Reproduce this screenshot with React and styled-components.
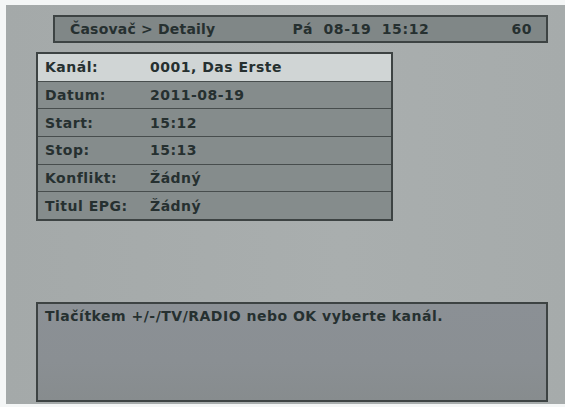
import styled, { createGlobalStyle } from 'styled-components';

const GlobalStyle = createGlobalStyle`
	html, body {
		margin: 0;
		padding: 0;
		background: #f4f6f6;
	}
	body {
		font-family: "DejaVu Sans", Verdana, sans-serif;
		font-size: 14px;
		font-weight: bold;
		letter-spacing: 0.5px;
		color: #263030;
	}
`;

const Screen = styled.div`
	display: flex;
	flex-direction: column;
	box-sizing: border-box;
	width: 559px;
	height: 399px;
	margin: 5px 0 0 6px;
	padding: 10px 17px 2px 30px;
	background: linear-gradient(90deg, #a4a9a9 0%, #a9aeae 60%, #a6abab 100%);
`;

const TitleBar = styled.div`
	display: flex;
	align-items: center;
	box-sizing: border-box;
	height: 28px;
	margin-left: 17px;
	padding: 0 14px 0 15px;
	background: #808787;
	border: 2px solid #3d4343;
`;

const Title = styled.span`
	flex: 1;
	letter-spacing: 0.2px;
`;

const Clock = styled.span`
	width: 219px;
	word-spacing: 5px;
	letter-spacing: 0.6px;
`;

const Signal = styled.span``;

const Table = styled.div`
	display: flex;
	flex-direction: column;
	box-sizing: border-box;
	width: 357px;
	margin-top: 9px;
	border: 2px solid #3d4343;
	background: #858c8c;
`;

const Row = styled.div`
	display: flex;
	align-items: center;
	height: 26.7px;
	padding-left: 7px;
	background: ${({ $active }) => ($active ? '#d0d5d5' : '#858c8c')};
	&:not(:last-child) {
		border-bottom: 1px solid #474d4d;
	}
`;

const Label = styled.span`
	width: 105px;
`;

const Value = styled.span``;

const HelpBox = styled.div`
	box-sizing: border-box;
	height: 100px;
	margin-top: auto;
	padding: 4px 7px;
	border: 2px solid #3d4343;
	background: linear-gradient(180deg, #8b9095 0%, #8a8f93 60%, #878c8e 100%);
`;

const rows = [
	['Kanál:', '0001, Das Erste'],
	['Datum:', '2011-08-19'],
	['Start:', '15:12'],
	['Stop:', '15:13'],
	['Konflikt:', 'Žádný'],
	['Titul EPG:', 'Žádný'],
];

export default function App() {
	return (
		<>
			<GlobalStyle />
			<Screen>
				<TitleBar>
					<Title>Časovač &gt; Detaily</Title>
					<Clock>Pá 08-19 15:12</Clock>
					<Signal>60</Signal>
				</TitleBar>
				<Table>
					{rows.map(([label, value], i) => (
						<Row key={label} $active={i === 0}>
							<Label>{label}</Label>
							<Value>{value}</Value>
						</Row>
					))}
				</Table>
				<HelpBox>Tlačítkem +/-/TV/RADIO nebo OK vyberte kanál.</HelpBox>
			</Screen>
		</>
	);
}
